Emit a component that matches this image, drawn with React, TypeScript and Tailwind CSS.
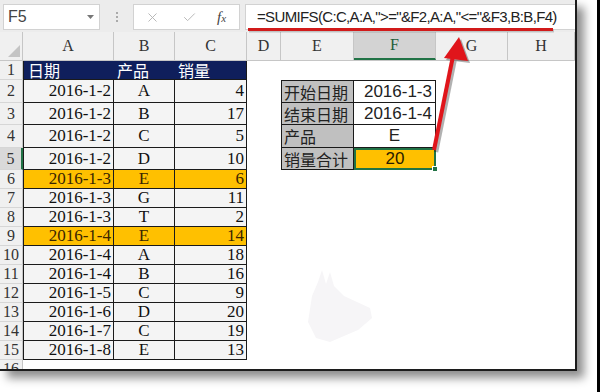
import { Check, X } from 'lucide-react'

const serif = { fontFamily: '"Liberation Serif", "Noto Sans CJK SC", serif' }
const sans = { fontFamily: '"Liberation Sans", "Noto Sans CJK SC", sans-serif' }
const cjk = { fontFamily: '"Noto Sans CJK SC", sans-serif' }

const data = [
  { n: 2, date: '2016-1-2', p: 'A', q: 4 },
  { n: 3, date: '2016-1-2', p: 'B', q: 17 },
  { n: 4, date: '2016-1-2', p: 'C', q: 5 },
  { n: 5, date: '2016-1-2', p: 'D', q: 10 },
  { n: 6, date: '2016-1-3', p: 'E', q: 6, hi: true },
  { n: 7, date: '2016-1-3', p: 'G', q: 11 },
  { n: 8, date: '2016-1-3', p: 'T', q: 2 },
  { n: 9, date: '2016-1-4', p: 'E', q: 14, hi: true },
  { n: 10, date: '2016-1-4', p: 'A', q: 18 },
  { n: 11, date: '2016-1-4', p: 'B', q: 16 },
  { n: 12, date: '2016-1-5', p: 'C', q: 9 },
  { n: 13, date: '2016-1-6', p: 'D', q: 20 },
  { n: 14, date: '2016-1-7', p: 'C', q: 19 },
  { n: 15, date: '2016-1-8', p: 'E', q: 13 },
]

// criteria table in E2:F5
const criteria = [
  { label: '开始日期', value: '2016-1-3', align: 'right' },
  { label: '结束日期', value: '2016-1-4', align: 'right' },
  { label: '产品', value: 'E', align: 'center' },
  { label: '销量合计', value: '20', align: 'center', selected: true },
]

function RowHead({ n, active }: { n: number; active?: boolean }) {
  return (
    <div
      style={serif}
      className={`w-[23px] shrink-0 flex items-center justify-center text-[16px] text-[#333] border-b border-[#d6d6d6] ${
        active ? 'bg-[#d9d9d9] border-r-2 border-r-[#217346]' : 'bg-[#f0f0f0] border-r border-r-[#c6c6c6]'
      }`}
    >
      {n}
    </div>
  )
}

function FormulaBar() {
  return (
    <div className="h-[32px] shrink-0 bg-[#ececec] flex items-start pt-[4px]">
      <div
        style={sans}
        className="ml-[3px] w-[97px] h-[26px] bg-white border border-[#d2d2d2] flex items-center justify-between pl-[4px] pr-[5px] text-[16px] text-[#444]"
      >
        <span>F5</span>
        <svg width="7" height="4" viewBox="0 0 7 4">
          <path d="M0 0h7L3.5 4z" fill="#777" />
        </svg>
      </div>
      <div className="w-[33px] h-[26px] flex flex-col items-center justify-center gap-[2px]">
        <span className="w-[2px] h-[2px] bg-[#aaa]" />
        <span className="w-[2px] h-[2px] bg-[#aaa]" />
        <span className="w-[2px] h-[2px] bg-[#aaa]" />
      </div>
      <div className="w-[107px] h-[26px] bg-white border border-[#d2d2d2] flex items-center">
        <X size={15} strokeWidth={1.5} className="ml-[11px] text-[#b4b4b4]" />
        <Check size={15} strokeWidth={1.5} className="ml-[22px] text-[#b4b4b4]" />
        <span style={serif} className="ml-[20px] italic text-[15px] text-[#444]">
          f<span className="text-[11px]">x</span>
        </span>
      </div>
      <div
        style={sans}
        className="ml-[5px] flex-1 h-[26px] bg-white border-y border-l border-[#d2d2d2] flex items-center pl-[11px] text-[15px] tracking-[-0.65px] text-[#222] whitespace-nowrap"
      >
        =SUMIFS(C:C,A:A,"&gt;="&amp;F2,A:A,"&lt;="&amp;F3,B:B,F4)
      </div>
    </div>
  )
}

function ColumnHeaders() {
  const cols = [
    { l: 'A', w: 'w-[91px]' },
    { l: 'B', w: 'w-[61px]' },
    { l: 'C', w: 'w-[72px]' },
    { l: 'D', w: 'w-[34px]' },
    { l: 'E', w: 'w-[73px]' },
    { l: 'F', w: 'w-[82px]', active: true },
    { l: 'G', w: 'w-[72px]' },
    { l: 'H', w: 'w-[67px]' },
  ]
  return (
    <div className="h-[29px] shrink-0 flex bg-[#f0f0f0] border-b border-[#c6c6c6]">
      <div className="w-[23px] shrink-0 border-r border-[#c6c6c6] flex items-end justify-end pr-[2px] pb-[3px]">
        <svg width="12" height="12" viewBox="0 0 12 12">
          <path d="M12 0v12H0z" fill="#c4c4c4" />
        </svg>
      </div>
      {cols.map((c) => (
        <div
          key={c.l}
          style={serif}
          className={`${c.w} shrink-0 flex items-center justify-center text-[16px] border-r border-[#c6c6c6] ${
            c.active ? 'bg-[#d3d3d3] text-[#1e5e3a] border-b-2 border-b-[#217346]' : 'text-[#333]'
          }`}
        >
          {c.l}
        </div>
      ))}
    </div>
  )
}

function CriteriaCells({ i }: { i: number }) {
  const c = criteria[i]
  const top = i === 0 ? 'border-t' : ''
  return (
    <>
      <div
        style={cjk}
        className={`w-[73px] shrink-0 bg-[#c0c0c0] border-l border-r border-b border-[#1a1a1a] ${top} flex items-center pl-[2px] text-[16px] text-[#222]`}
      >
        {c.label}
      </div>
      {c.selected ? (
        <div
          style={sans}
          className="relative w-[82px] shrink-0 bg-[#ffc000] border-2 border-[#217346] flex items-center justify-center text-[17px] text-[#2a1c00]"
        >
          {c.value}
          <span className="absolute -right-[4px] -bottom-[4px] w-[6px] h-[6px] bg-[#217346] border border-white" />
        </div>
      ) : (
        <div
          style={sans}
          className={`w-[82px] shrink-0 bg-white border-r border-b border-[#1a1a1a] ${top} flex items-center ${
            c.align === 'right' ? 'justify-end pr-[3px]' : 'justify-center'
          } text-[17px] text-[#222]`}
        >
          {c.value}
        </div>
      )}
    </>
  )
}

function DataRow({ r, idx }: { r: (typeof data)[number]; idx: number }) {
  const tall = idx < 4
  const bg = r.hi ? 'bg-[#ffc000] text-[#3a2500]' : 'bg-[#f4f4f4] text-[#111]'
  return (
    <div className={`flex shrink-0 ${tall ? (idx % 2 === 0 ? 'h-[23px]' : 'h-[22px]') : 'h-[19px]'}`}>
      <RowHead n={r.n} active={r.n === 5} />
      <div style={serif} className={`w-[91px] shrink-0 ${bg} border-l border-r border-b border-[#1a1a1a] flex items-center justify-end pr-[2px] text-[17px]`}>
        {r.date}
      </div>
      <div style={serif} className={`w-[61px] shrink-0 ${bg} border-r border-b border-[#1a1a1a] flex items-center justify-center text-[17px]`}>
        {r.p}
      </div>
      <div style={serif} className={`w-[72px] shrink-0 ${bg} border-r border-b border-[#1a1a1a] flex items-center justify-end pr-[2px] text-[17px]`}>
        {r.q}
      </div>
      <div className="w-[34px] shrink-0" />
      {tall ? <CriteriaCells i={idx} /> : <div className="w-[155px] shrink-0" />}
      <div className="flex-1" />
    </div>
  )
}

export default function App() {
  return (
    <div className="relative w-[600px] h-[392px] bg-white flex overflow-hidden">
      <div className="w-[597px] h-full">
        <div className="w-[577px] h-[371px] bg-white border-r-2 border-b-2 border-[#1c1c1c] shadow-[7px_7px_9px_rgba(0,0,0,0.45)] overflow-hidden flex flex-col">
          <FormulaBar />
          <ColumnHeaders />
          <div className="h-[19px] shrink-0 flex">
            <RowHead n={1} />
            <div style={cjk} className="w-[91px] shrink-0 bg-[#0f1f5c] border-l border-b border-[#1a1a1a] flex items-center pl-[4px] text-[16px] text-white">
              日期
            </div>
            <div style={cjk} className="w-[61px] shrink-0 bg-[#0f1f5c] border-b border-[#1a1a1a] flex items-center pl-[3px] text-[16px] text-white">
              产品
            </div>
            <div style={cjk} className="w-[72px] shrink-0 bg-[#0f1f5c] border-r border-b border-[#1a1a1a] flex items-center pl-[3px] text-[16px] text-white">
              销量
            </div>
          </div>
          {data.map((r, i) => (
            <DataRow key={r.n} r={r} idx={i} />
          ))}
          <div className="h-[19px] shrink-0 flex">
            <RowHead n={16} />
          </div>
        </div>
      </div>
      <div className="w-[3px] h-full bg-black" />

      {/* annotation: red underline + arrow */}
      <svg className="absolute left-0 top-0 pointer-events-none" width="600" height="392" viewBox="0 0 600 392">
        <rect x="249" y="29.5" width="305" height="3" fill="#000" opacity="0.18" />
        <rect x="248" y="28" width="305" height="3" fill="#d11a1a" />
        <g opacity="0.3" transform="translate(2 2)">
          <line x1="434" y1="150" x2="453" y2="56" stroke="#000" strokeWidth="4.5" />
          <path d="M459 37 L444 58 L468 61 Z" fill="#000" />
        </g>
        <line x1="434" y1="150" x2="453" y2="56" stroke="#e0151b" strokeWidth="4" />
        <path d="M459 37 L444 58 L468 61 Z" fill="#e0151b" />
        {/* faint watermark */}
        <path
          d="M318 282 L322 270 L326 284 L330 272 L334 286 L344 296 L370 308 L372 318 L358 330 L330 342 L316 338 L308 322 L312 296 Z"
          fill="#f6f5f7"
        />
      </svg>
    </div>
  )
}
